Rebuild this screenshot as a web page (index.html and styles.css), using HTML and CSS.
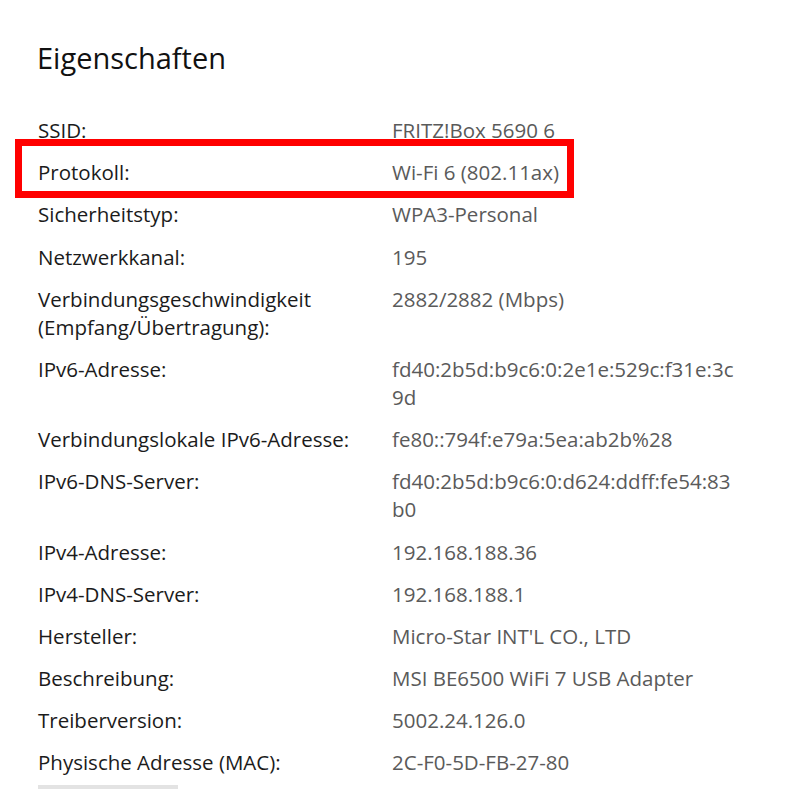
FILE: index.html
```html
<!DOCTYPE html>
<html lang="de">
<head>
<meta charset="utf-8">
<title>Eigenschaften</title>
<link rel="stylesheet" href="styles.css">
</head>
<body>
<main class="page">
  <h1 class="title">Eigenschaften</h1>
  <dl class="props">
    <div class="row"><dt>SSID:</dt><dd>FRITZ!Box 5690 6</dd></div>
    <div class="row row-marked"><dt>Protokoll:</dt><dd>Wi-Fi 6 (802.11ax)</dd></div>
    <div class="row"><dt>Sicherheitstyp:</dt><dd>WPA3-Personal</dd></div>
    <div class="row"><dt>Netzwerkkanal:</dt><dd>195</dd></div>
    <div class="row"><dt>Verbindungsgeschwindigkeit (Empfang/Übertragung):</dt><dd>2882/2882 (Mbps)</dd></div>
    <div class="row"><dt>IPv6-Adresse:</dt><dd class="wrap">fd40:2b5d:b9c6:0:2e1e:529c:f31e:3c9d</dd></div>
    <div class="row"><dt>Verbindungslokale IPv6-Adresse:</dt><dd>fe80::794f:e79a:5ea:ab2b%28</dd></div>
    <div class="row"><dt>IPv6-DNS-Server:</dt><dd class="wrap">fd40:2b5d:b9c6:0:d624:ddff:fe54:83b0</dd></div>
    <div class="row"><dt>IPv4-Adresse:</dt><dd>192.168.188.36</dd></div>
    <div class="row"><dt>IPv4-DNS-Server:</dt><dd>192.168.188.1</dd></div>
    <div class="row"><dt>Hersteller:</dt><dd>Micro-Star INT'L CO., LTD</dd></div>
    <div class="row"><dt>Beschreibung:</dt><dd>MSI BE6500 WiFi 7 USB Adapter</dd></div>
    <div class="row"><dt>Treiberversion:</dt><dd>5002.24.126.0</dd></div>
    <div class="row"><dt>Physische Adresse (MAC):</dt><dd>2C-F0-5D-FB-27-80</dd></div>
  </dl>
  <button class="copy-btn" type="button" aria-label="Kopieren"></button>
</main>
</body>
</html>
```
FILE: styles.css
```css
html, body {
  margin: 0;
  padding: 0;
  background: #ffffff;
}
body {
  font-family: "Open Sans", "Noto Sans", sans-serif;
  color: #1b1b1b;
  overflow: hidden;
  height: 789px;
}
.page {
  padding: 36px 0 0 38px;
}
.title {
  margin: 0 0 36px -1px;
  font-size: 29px;
  font-weight: 400;
  line-height: 44px;
  color: #111111;
}
.props {
  margin: 0;
  display: flex;
  flex-direction: column;
  gap: 14.2px;
}
.row {
  display: grid;
  grid-template-columns: 354px 342px;
  font-size: 20.5px;
  line-height: 28px;
  position: relative;
}
.row dt {
  margin: 0;
  color: #1b1b1b;
  padding-right: 20px;
}
.row dd {
  margin: 0;
  color: #5a5a5a;
}
.row dd.wrap {
  word-break: break-all;
}
.row-marked::after {
  content: "";
  position: absolute;
  left: -23px;
  width: 545px;
  top: -19px;
  bottom: -12px;
  border: 7px solid #ff0000;
  pointer-events: none;
}
.copy-btn {
  display: block;
  margin-top: 9px;
  width: 140px;
  height: 32px;
  border: 0;
  padding: 0;
  background: #e3e3e3;
}
```
